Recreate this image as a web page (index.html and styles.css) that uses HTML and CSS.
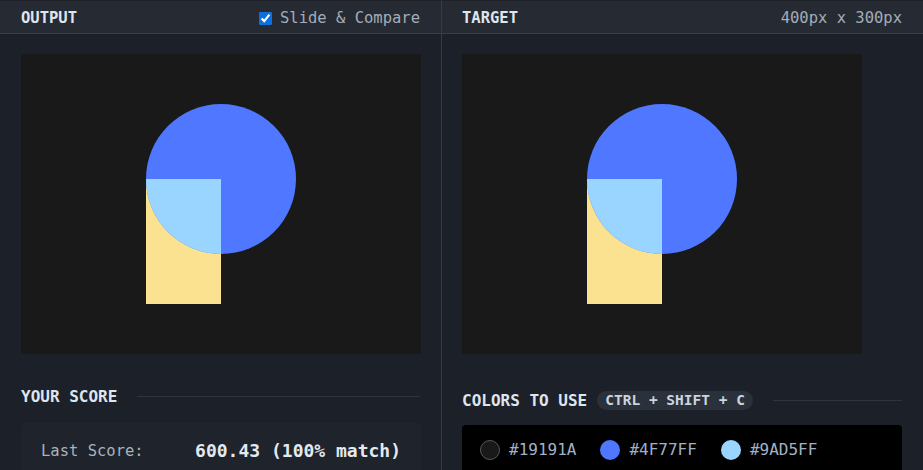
FILE: index.html
```html
<!DOCTYPE html>
<html>
<head>
<meta charset="utf-8">
<link rel="stylesheet" href="styles.css">
</head>
<body>
<div class="app">
  <section class="panel panel-left">
    <header class="bar">
      <h2 class="bar-title">OUTPUT</h2>
      <label class="slide"><input type="checkbox" checked> Slide &amp; Compare</label>
    </header>
    <div class="body">
      <div class="canvas">
        <svg width="400" height="300" viewBox="0 0 400 300">
          <rect x="0" y="0" width="400" height="300" fill="#19191A"/>
          <rect x="125" y="125" width="75" height="125" fill="#FAE290"/>
          <circle cx="200" cy="125" r="75" fill="#4F77FF"/>
          <path d="M200 125 L125 125 A75 75 0 0 0 200 200 Z" fill="#9AD5FF"/>
        </svg>
      </div>
      <div class="section-head">
        <h3 class="section-title">YOUR SCORE</h3>
        <span class="rule"></span>
      </div>
      <div class="score-box">
        <span class="score-label">Last Score:</span>
        <span class="score-value">600.43 (100% match)</span>
      </div>
    </div>
  </section>
  <section class="panel panel-right">
    <header class="bar">
      <h2 class="bar-title">TARGET</h2>
      <span class="dims">400px x 300px</span>
    </header>
    <div class="body">
      <div class="canvas">
        <svg width="400" height="300" viewBox="0 0 400 300">
          <rect x="0" y="0" width="400" height="300" fill="#19191A"/>
          <rect x="125" y="125" width="75" height="125" fill="#FAE290"/>
          <circle cx="200" cy="125" r="75" fill="#4F77FF"/>
          <path d="M200 125 L125 125 A75 75 0 0 0 200 200 Z" fill="#9AD5FF"/>
        </svg>
      </div>
      <div class="section-head section-head-colors">
        <h3 class="section-title">COLORS TO USE</h3>
        <span class="kbd">CTRL + SHIFT + C</span>
        <span class="rule rule-colors"></span>
      </div>
      <div class="colors-box">
        <span class="swatch"><span class="dot dot-dark"></span>#19191A</span>
        <span class="swatch"><span class="dot dot-blue"></span>#4F77FF</span>
        <span class="swatch"><span class="dot dot-light"></span>#9AD5FF</span>
      </div>
    </div>
  </section>
</div>
</body>
</html>
```

FILE: styles.css
```css
* { box-sizing: border-box; }
html, body {
  margin: 0;
  padding: 0;
  background: #1c2028;
  width: 923px;
  height: 470px;
  overflow: hidden;
  font-family: "DejaVu Sans Mono", "Liberation Mono", monospace;
}
.app {
  display: flex;
  height: 470px;
}
.panel {
  display: flex;
  flex-direction: column;
}
.panel-left {
  width: 442px;
  border-right: 1px solid #363c45;
}
.panel-right {
  flex: 1;
}
.bar {
  flex-shrink: 0;
  height: 34px;
  background: #262b33;
  border-top: 1px solid #1e2228;
  border-bottom: 1px solid #394049;
  display: flex;
  align-items: center;
  justify-content: space-between;
  padding: 2px 21px 0 21px;
}
.panel-right .bar { padding: 2px 21px 0 20px; }
.bar-title {
  margin: 0;
  font-size: 15.5px;
  font-weight: bold;
  color: #dfe5ee;
}
.slide {
  display: flex;
  align-items: center;
  gap: 8px;
  font-size: 15.5px;
  color: #a3acb8;
}
.slide input {
  margin: 0;
  width: 13px;
  height: 13px;
  accent-color: #0b6fe0;
}
.dims {
  font-size: 15.5px;
  color: #a3acb8;
}
.body {
  flex-shrink: 0;
  padding: 20px 21px 0 21px;
  display: flex;
  flex-direction: column;
}
.panel-right .body { padding: 20px 21px 0 20px; }
.canvas {
  flex-shrink: 0;
  width: 400px;
  height: 300px;
}
.canvas svg { display: block; }
.section-head {
  flex-shrink: 0;
  display: flex;
  align-items: center;
  margin-top: 33px;
  height: 18px;
  gap: 20px;
}
.section-head-colors {
  margin-top: 37px;
  gap: 10px;
}
.section-title {
  margin: 0;
  font-size: 16px;
  font-weight: bold;
  color: #dfe5ee;
  white-space: nowrap;
}
.rule {
  flex: 1;
  height: 1px;
  background: #2f353e;
}
.rule-colors { margin-left: 10px; }
.kbd {
  background: #2a313b;
  color: #ccd4df;
  font-size: 14.5px;
  font-weight: bold;
  padding: 0 8px;
  height: 19px;
  line-height: 19px;
  border-radius: 10px;
  white-space: nowrap;
}
.score-box {
  flex-shrink: 0;
  margin-top: 18px;
  width: 400px;
  height: 60px;
  background: #1f232b;
  border-radius: 4px;
  display: flex;
  justify-content: space-between;
  align-items: flex-start;
  padding: 17px 20px 0 20px;
}
.score-label {
  font-size: 15.5px;
  color: #a9b2be;
  line-height: 22px;
}
.score-value {
  font-size: 18px;
  font-weight: bold;
  color: #e4e9f0;
  line-height: 22px;
}
.colors-box {
  flex-shrink: 0;
  margin-top: 16px;
  width: 440px;
  height: 60px;
  background: #000000;
  border-radius: 4px;
  display: flex;
  align-items: flex-start;
  gap: 24px;
  padding: 15px 18px 0 18px;
}
.swatch {
  display: flex;
  align-items: center;
  gap: 9px;
  font-size: 16px;
  color: #a1b1c6;
  line-height: 20px;
}
.dot {
  width: 20px;
  height: 20px;
  border-radius: 50%;
  display: inline-block;
}
.dot-dark { background: #19191a; border: 1.5px solid #55585e; }
.dot-blue { background: #4f77ff; }
.dot-light { background: #9ad5ff; }
```
